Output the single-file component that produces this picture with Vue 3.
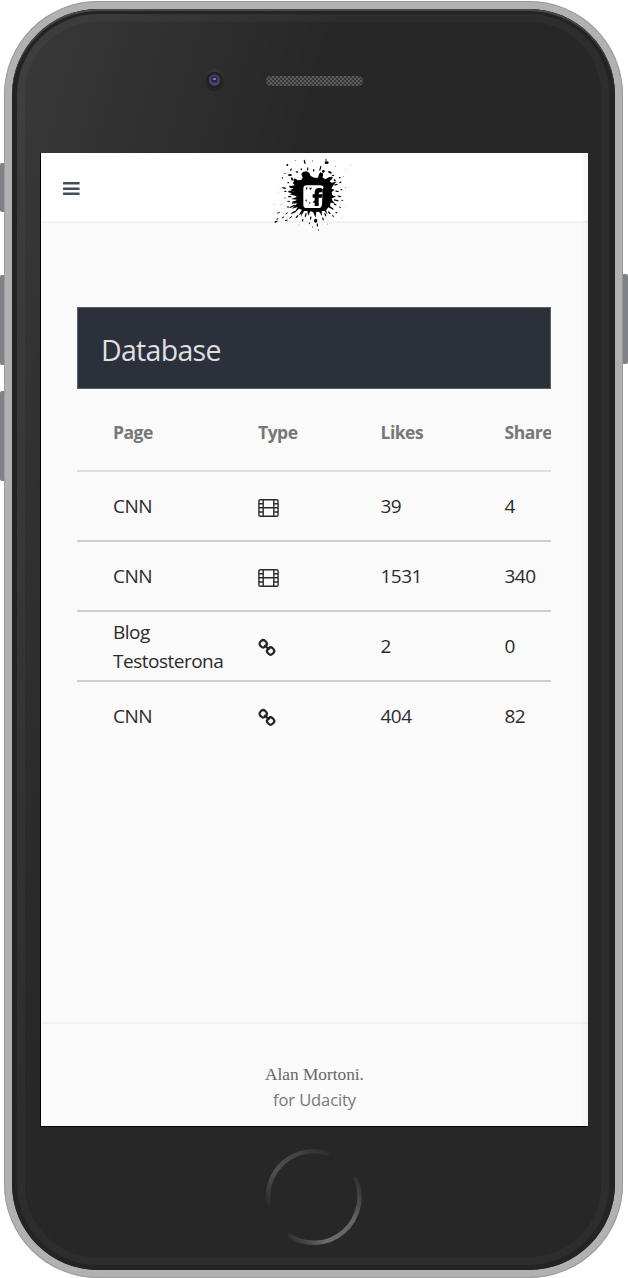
<script setup>
const rows = [
  { page: 'CNN', type: 'video', likes: 39, shares: 4 },
  { page: 'CNN', type: 'video', likes: 1531, shares: 340 },
  { page: 'Blog Testosterona', type: 'link', likes: 2, shares: 0 },
  { page: 'CNN', type: 'link', likes: 404, shares: 82 },
]

// Small ink drops around the logo: x, y, rx, ry, rotation
const drops = [
  [128, 36, 2, 7, -15], [194, 38, 6, 4, 0], [192, 30, 1.5, 4, 0], [76, 45, 3, 3, 0],
  [87, 59, 2, 4, 30], [84, 75, 6, 3, 0], [69, 70, 2, 2, 0], [61, 84, 2, 2, 0],
  [105, 66, 4, 2, 20], [118, 58, 2, 3, 0], [137, 57, 2, 5, 10], [155, 61, 2, 4, 0],
  [175, 55, 2, 8, 15], [184, 64, 4, 4, 0], [178, 77, 5, 9, 15], [204, 67, 6, 3, 20],
  [213, 76, 4, 2, 0], [206, 86, 4, 7, 45], [218, 91, 3, 3, 0], [233, 83, 3, 2, 0],
  [235, 97, 4, 2, -20], [222, 104, 6, 2, -15], [238, 119, 3, 2, 0], [225, 124, 6, 2, 10],
  [232, 139, 6, 2, 15], [241, 151, 3, 1.5, 0], [223, 151, 8, 2, 15], [219, 163, 5, 2, 30],
  [234, 172, 4, 1.5, 35], [210, 175, 6, 2, 40], [223, 188, 3, 2, 0], [202, 188, 2, 5, -45],
  [213, 198, 4, 1.5, 60], [190, 194, 2, 6, -20], [183, 207, 2, 5, -15], [161, 212, 5, 6, 0],
  [166, 225, 2, 5, 0], [169, 240, 1.5, 2, 0], [146, 204, 2, 5, 10], [142, 220, 1.5, 3, 0],
  [131, 195, 2, 7, 15], [122, 211, 2, 4, 20], [116, 189, 2, 8, 30], [105, 200, 2, 6, 40],
  [94, 187, 2, 8, 55], [86, 202, 5, 1.5, -35], [74, 190, 5, 1.5, -40], [63, 202, 4, 1.5, -30],
  [42, 215, 5, 2.5, -20], [46, 207, 3, 1.5, -30], [50, 188, 5, 1.5, -30], [73, 211, 5, 1.5, -15],
  [91, 169, 10, 2, -25], [78, 171, 3, 2, 0], [97, 155, 8, 2, -15], [80, 154, 5, 1.5, 0],
  [83, 140, 6, 2, 0], [69, 144, 2, 1.5, 0], [88, 126, 10, 3, 10], [70, 124, 4, 2, 0],
  [66, 114, 7, 2, 10], [87, 111, 6, 3, 15], [100, 91, 6, 5, 35], [90, 87, 3, 5, -20],
  [79, 98, 3, 2, 0], [48, 126, 1, 1, 0], [250, 112, 1.5, 1, 0], [244, 80, 1.2, 1, 0],
  [221, 49, 1.5, 1, 0], [251, 60, 1, 1, 0], [267, 45, 1, 1, 0], [152, 33, 1, 2, 0],
  [101, 32, 1.5, 1, 0], [37, 163, 1, 1, 0], [254, 168, 1, 1, 0], [196, 222, 1.5, 1, 0],
  [238, 204, 1, 1, 0], [111, 225, 1.5, 1, 0], [151, 231, 1, 2, 0], [57, 163, 1.5, 1, 0],
]
</script>

<template>
  <div class="stage">
    <i class="key mute"></i>
    <i class="key up"></i>
    <i class="key down"></i>
    <i class="key power"></i>

    <div class="phone">
      <div class="bezel">
        <div class="top">
          <svg class="camera" width="24" height="24" viewBox="0 0 24 24">
            <defs>
              <radialGradient id="lens" cx=".5" cy=".4">
                <stop offset="0" stop-color="#241f38" />
                <stop offset=".55" stop-color="#40365a" />
                <stop offset="1" stop-color="#55417c" />
              </radialGradient>
              <linearGradient id="rim" x1="0" y1="0" x2="0" y2="1">
                <stop offset="0" stop-color="#353535" />
                <stop offset="1" stop-color="#232323" />
              </linearGradient>
            </defs>
            <circle cx="12.5" cy="12" r="11" fill="url(#rim)" />
            <circle cx="12.5" cy="12" r="8" fill="#201f22" />
            <circle cx="12.5" cy="12" r="5.7" fill="url(#lens)" />
            <circle cx="12.5" cy="12" r="2.8" fill="#30283f" />
            <ellipse cx="12.5" cy="11" rx="1.6" ry=".8" fill="#b5b0bb" />
          </svg>
          <div class="speaker"></div>
        </div>

        <div class="screen">
          <header>
            <svg class="menu" width="17" height="15" viewBox="0 0 17 15">
              <g fill="#414d59">
                <rect x="0" y="1" width="16.6" height="2.5" rx=".5" />
                <rect x="0" y="6.4" width="16.6" height="2.5" rx=".5" />
                <rect x="0" y="11.6" width="16.6" height="2.5" rx=".5" />
              </g>
            </svg>
            <svg class="logo" width="100" height="87" viewBox="0 9 300 261">
              <g fill="#000">
                <path d="M101 91L118 90L122 83L118 72L123 66L134 64L142 69L146 78L157 83L168 83L171 72L177 65L179 80L190 88L202 81L208 83L203 95L211 98L224 94L214 106L208 116L218 119L209 126L211 136L222 140L209 145L212 153L218 159L206 158L204 167L211 178L199 172L192 181L197 194L187 182L179 184L180 198L172 186L163 185L161 203L153 186L145 184L139 197L136 183L126 183L117 200L119 179L111 176L95 192L107 171L90 176L106 160L88 161L105 149L87 147L105 141L99 137L82 133L97 127L84 120L94 116L85 109L98 106L92 98Z" />
                <ellipse
                  v-for="(d, i) in drops" :key="i"
                  :cx="d[0]" :cy="d[1]" :rx="d[2]" :ry="d[3]"
                  :transform="`rotate(${d[4]} ${d[0]} ${d[1]})`"
                />
              </g>
              <path fill="#fff" d="M134 106H174Q184 106 185 112L182 117L180 164Q179 174 169 174H134Q124 174 124 164V116Q124 106 134 106Z" />
              <path fill="#000" d="M131 113L137 112L134 120ZM142 113L150 113L145 121ZM130 151L135 148L133 156ZM140 159L145 156L144 162ZM158 125Q159 115 170 114H177L183 119L180 127H174Q170 127 170 133H182L179 143H170V168H158V159L152 157L158 151V143H152V133H158Z" />
            </svg>
          </header>

          <main>
            <section class="panel">
              <h1>Database</h1>
              <div class="row head">
                <span>Page</span><span>Type</span><span>Likes</span><span>Share</span>
              </div>
              <div v-for="(r, i) in rows" :key="i" class="row">
                <span class="name">{{ r.page }}</span>
                <span class="type">
                  <svg v-if="r.type === 'video'" width="21" height="20" viewBox="0 0 21 20">
                    <g fill="none" stroke="#2b2b2b" stroke-width="1.4">
                      <rect x=".9" y="1.7" width="19.2" height="16.6" rx="1.4" />
                      <path d="M5.2 1.7V18.3M15.8 1.7V18.3M5.2 9.7H15.8M.9 5.7H5.2M.9 9.8H5.2M.9 14H5.2M15.8 5.7H20M15.8 9.8H20M15.8 14H20" />
                    </g>
                  </svg>
                  <svg v-else width="21" height="20" viewBox="0 0 21 20">
                    <g fill="none" stroke="#252525" stroke-width="2.2">
                      <rect x="1.8" y="2.4" width="6.8" height="6.8" rx="2.9" transform="rotate(45 5.2 5.8)" />
                      <rect x="9.2" y="9.6" width="6.8" height="6.8" rx="2.9" transform="rotate(45 12.6 13)" />
                      <path d="M6.4 7L11.4 11.8" />
                    </g>
                  </svg>
                </span>
                <span class="num">{{ r.likes }}</span>
                <span class="num">{{ r.shares }}</span>
              </div>
            </section>
          </main>

          <footer>
            <p class="author">Alan Mortoni.</p>
            <p class="course">for Udacity</p>
          </footer>
        </div>

        <svg class="home" width="98" height="100" viewBox="0 0 98 100">
          <defs>
            <linearGradient id="ringA" gradientUnits="userSpaceOnUse" x1="8" y1="68" x2="70" y2="4">
              <stop offset="0" stop-color="#272727" />
              <stop offset=".35" stop-color="#505050" />
              <stop offset=".65" stop-color="#464646" />
              <stop offset="1" stop-color="#272727" />
            </linearGradient>
            <linearGradient id="ringB" gradientUnits="userSpaceOnUse" x1="20" y1="92" x2="94" y2="26">
              <stop offset="0" stop-color="#272727" />
              <stop offset=".3" stop-color="#6b6b6b" />
              <stop offset=".65" stop-color="#646464" />
              <stop offset="1" stop-color="#272727" />
            </linearGradient>
          </defs>
          <g fill="none" stroke-width="4.4">
            <path d="M3.6 58A45.8 45.8 0 0 1 64 6.8" stroke="url(#ringA)" />
            <path d="M89.8 29.8A45.8 45.8 0 0 1 23 87.9" stroke="url(#ringB)" />
          </g>
        </svg>
      </div>
    </div>
  </div>
</template>

<style>
body {
  margin: 0;
  background: #fff;
}
</style>

<style scoped>
.stage {
  position: relative;
  box-sizing: border-box;
  width: 628px;
  height: 1278px;
  padding: 1px 5px 0 4px;
  overflow: hidden;
  font-family: "Open Sans", "Noto Sans", sans-serif;
}
.key {
  position: absolute;
  width: 6px;
  background: #808187;
  border-radius: 2px;
}
.mute { left: 0; top: 163px; height: 49px; }
.up { left: 0; top: 275px; height: 90px; }
.down { left: 0; top: 391px; height: 90px; }
.power { right: 0; top: 274px; height: 90px; }
.phone {
  position: relative;
  box-sizing: border-box;
  height: 1277px;
  padding: 8px;
  border-radius: 94px;
  background: #b1b1b1;
  box-shadow: inset 0 0 0 1px #9b9b9b;
}
.bezel {
  position: relative;
  box-sizing: border-box;
  height: 1261px;
  border-radius: 86px;
  background: linear-gradient(106deg, #3a3a3a 0, #333 12%, #272727 34%);
  box-shadow: inset 0 2px #484848, inset 0 0 0 5px #242424;
  display: flex;
  flex-direction: column;
}
.bezel::before {
  content: "";
  position: absolute;
  inset: 5px 6px 5px 5px;
  border: 8px solid rgba(255, 255, 255, .03);
  border-radius: 80px;
}
.top {
  height: 144px;
  flex: none;
  display: flex;
  align-items: flex-start;
}
.camera {
  margin: 59px 0 0 190px;
  flex: none;
}
.speaker {
  margin: 67px 0 0 40px;
  width: 97px;
  height: 10px;
  border-radius: 5px;
  background: repeating-conic-gradient(#5c5c5c 0 25%, #373737 0 50%) 0 0 / 4px 4px;
}
.screen {
  position: relative;
  margin-left: 29px;
  width: 547px;
  height: 973px;
  flex: none;
  display: flex;
  flex-direction: column;
  background: #fafafa;
  box-shadow: -1px 1px #000, -1px 0 #000;
}
.screen::after {
  content: "";
  position: absolute;
  inset: 0 0 0 auto;
  width: 9px;
  background: linear-gradient(to right, rgba(0, 0, 0, 0), rgba(0, 0, 0, .035));
}
header {
  position: relative;
  box-sizing: border-box;
  height: 70px;
  flex: none;
  padding: 28px 0 0 22px;
  background: #fff;
  border-bottom: 2px solid #f2f2f2;
}
.menu {
  display: block;
}
.logo {
  position: absolute;
  left: 221px;
  top: 0;
  filter: blur(.45px);
}
main {
  flex: 1;
  padding: 84px 37px 0 36px;
}
.panel {
  overflow: hidden;
}
h1 {
  box-sizing: border-box;
  height: 82px;
  margin: 0;
  padding-left: 24px;
  background: #2c303b;
  box-shadow: inset 0 0 0 1px #5b5f68;
  color: #dfdfe0;
  font-size: 28.5px;
  line-height: 86px;
  font-weight: 400;
  letter-spacing: -.7px;
}
.row {
  box-sizing: border-box;
  height: 70px;
  width: 500px;
  padding: 1px 0 0 36px;
  display: grid;
  grid-template-columns: 145px 122.5px 124px 1fr;
  align-items: center;
  border-top: 2px solid #cdcdcd;
  color: #2b2b2b;
  font-size: 19px;
  line-height: 29px;
}
.row.head {
  height: 81px;
  border-top: 0;
  padding-top: 6px;
  color: #777;
  font-size: 17.5px;
  font-weight: 700;
  letter-spacing: -.5px;
}
.row.head + .row {
  border-top-color: #dedede;
}
.name {
  width: 112px;
  letter-spacing: -.5px;
}
.num {
  letter-spacing: -.5px;
}
.type {
  display: flex;
  padding-top: 3px;
}
footer {
  box-sizing: border-box;
  height: 104px;
  flex: none;
  padding-top: 38px;
  border-top: 2px solid #f1f1f1;
  text-align: center;
  color: #777;
}
footer p {
  margin: 0;
  line-height: 26px;
}
.author {
  font-family: "Liberation Serif", serif;
  font-size: 17.3px;
  color: #666;
}
footer .course {
  margin-top: -1px;
  font-size: 16.5px;
  letter-spacing: -.1px;
}
.home {
  margin: 21px 0 0 253px;
}
</style>
